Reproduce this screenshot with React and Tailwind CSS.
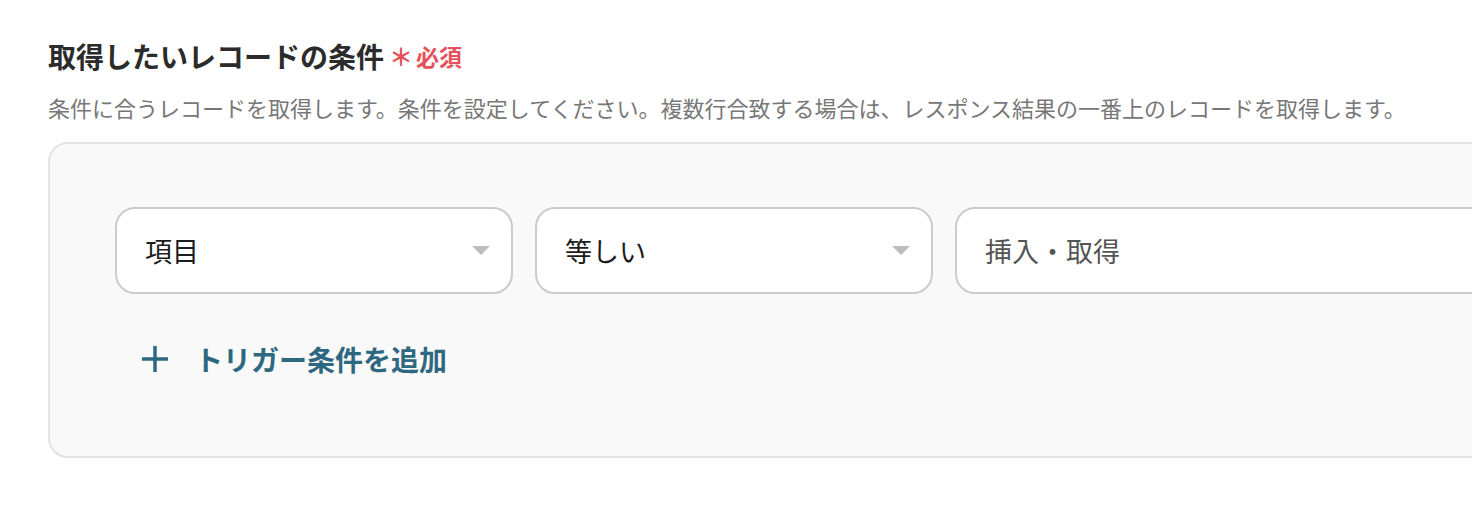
const FONT = { fontFamily: '"Noto Sans CJK JP", "Noto Sans", sans-serif' };

function Caret() {
  return (
    <svg width="18" height="9" viewBox="0 0 18 9" className="shrink-0">
      <path d="M0 0 L18 0 L9 9 Z" fill="#bdbdbd" />
    </svg>
  );
}

function SelectBox({ label }) {
  return (
    <div className="flex h-[87px] w-[398px] shrink-0 items-center justify-between rounded-[20px] border-2 border-[#cbcbcb] bg-white pl-[28px] pr-[21px]">
      <span className="text-[27px] leading-none text-[#1c1c1c]">{label}</span>
      <Caret />
    </div>
  );
}

export default function App() {
  return (
    <div className="h-[516px] w-[1472px] overflow-hidden bg-white" style={FONT}>
      <div className="pl-12 pt-[35px]">
        {/* Heading */}
        <div className="flex items-center">
          <h2 className="text-[28px] font-bold leading-[42px] text-[#2b2b2b]">
            取得したいレコードの条件
          </h2>
          <span className="ml-[5px] flex items-center text-[23px] font-bold text-[#e5525b]">
            <span className="mr-[3px] text-[24px] leading-none">＊</span>
            必須
          </span>
        </div>

        <p className="mt-[14px] whitespace-nowrap text-[22px] leading-[33px] text-[#777777]">
          条件に合うレコードを取得します。条件を設定してください。複数行合致する場合は、レスポンス結果の一番上のレコードを取得します。
        </p>

        {/* Condition panel */}
        <div className="mt-[18px] w-[1600px] rounded-[20px] border-2 border-[#e3e3e3] bg-[#f9f9f9] pb-[77px] pl-[65px] pt-[63px]">
          <div className="flex gap-[22px]">
            <SelectBox label="項目" />
            <SelectBox label="等しい" />
            <div className="flex h-[87px] flex-1 items-center rounded-[20px] border-2 border-[#cbcbcb] bg-white pl-[28px]">
              <span className="text-[27px] leading-none text-[#555555]">挿入・取得</span>
            </div>
          </div>

          <button className="mt-[45px] ml-[27px] flex h-[40px] items-center gap-[27px] text-[#2e6880]">
            <svg width="26" height="26" viewBox="0 0 26 26">
              <path d="M13 0 V26 M0 13 H26" stroke="currentColor" strokeWidth="3.5" />
            </svg>
            <span className="text-[28px] font-bold leading-none">トリガー条件を追加</span>
          </button>
        </div>
      </div>
    </div>
  );
}
